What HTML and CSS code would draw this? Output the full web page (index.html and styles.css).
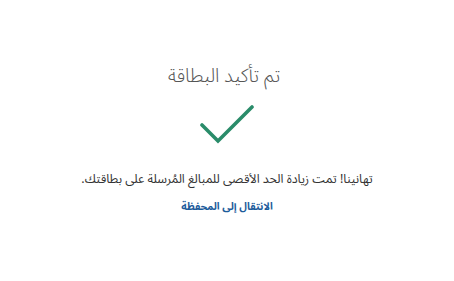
FILE: index.html
```html
<!DOCTYPE html>
<html lang="ar" dir="rtl">
<head>
<meta charset="utf-8">
<link rel="stylesheet" href="styles.css">
</head>
<body>
<main class="page">
  <h1 class="title">تم تأكيد البطاقة</h1>
  <svg class="check" width="56" height="40" viewBox="0 0 56 40" aria-hidden="true">
    <path d="M3 20 L19 36 L53 2" fill="none" stroke="#2a8c6a" stroke-width="3.6" stroke-linecap="round" stroke-linejoin="miter"/>
  </svg>
  <p class="message">تهانينا! تمت زيادة الحد الأقصى للمبالغ المُرسلة على بطاقتك.</p>
  <a class="link" href="#">الانتقال إلى المحفظة</a>
</main>
</body>
</html>
```
FILE: styles.css
```css
html, body {
  margin: 0;
  padding: 0;
  background: #ffffff;
}
body {
  font-family: "Noto Sans Arabic", "DejaVu Sans", sans-serif;
  width: 454px;
  height: 281px;
}
.page {
  display: flex;
  flex-direction: column;
  align-items: center;
  padding-top: 60px;
}
.title {
  margin: 0 6px 0 0;
  font-size: 19px;
  font-weight: 300;
  color: #555555;
  line-height: 32px;
}
.check {
  margin-top: 13px;
  display: block;
}
.message {
  margin: 24px 0 0;
  font-size: 12.4px;
  color: #333333;
  line-height: 20px;
}
.link {
  margin-top: 9px;
  font-size: 10.4px;
  font-weight: 700;
  color: #1d5c9b;
  text-decoration: none;
  line-height: 18px;
}
```
